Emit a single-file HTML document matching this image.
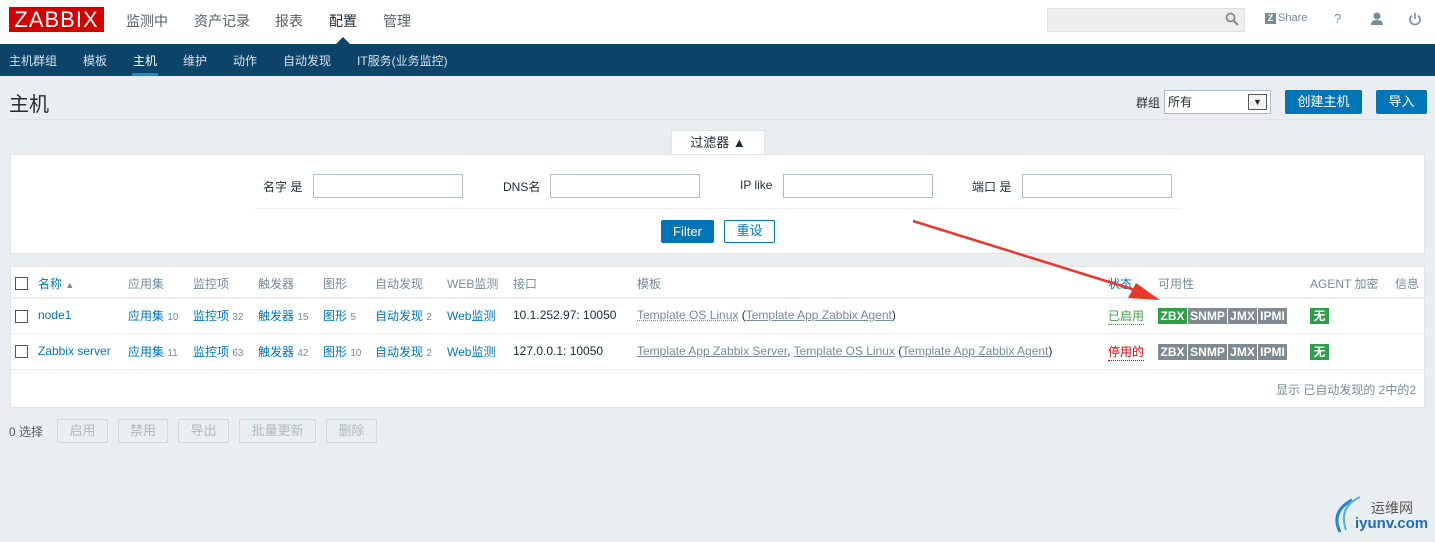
<!DOCTYPE html>
<html><head><meta charset="utf-8"><style>
*{margin:0;padding:0;box-sizing:border-box}
body{width:1435px;height:542px;background:#ebeef0;font-family:"Liberation Sans","Noto Sans CJK SC",sans-serif;font-size:12px;color:#1f2c33;position:relative;overflow:hidden}
.a{position:absolute;white-space:nowrap}
.top{position:absolute;left:0;top:0;width:1435px;height:44px;background:#fff}
.nav{position:absolute;left:0;top:44px;width:1435px;height:32px;background:#0b4468}
.m{font-size:14px;color:#555f66;top:11px}
.s{color:#fff;font-size:12px;top:52px;color:#d8e2ea}
.lnk{color:#0275b8}
.g{color:#768d99}
.inp{position:absolute;height:24px;border:1px solid #acbbc4;background:#fff}
.cb{position:absolute;width:13px;height:13px;border:1px solid #555;background:#fff}
.n{font-size:10px;color:#768d99}
.btn{position:absolute;background:#0275b8;color:#fff;font-size:13px;text-align:center;border-radius:2px}
.dis{position:absolute;height:24px;top:419px;border:1px solid #cfd7dc;color:#acbbc4;font-size:13px;text-align:center;line-height:22px;border-radius:2px}
.av{position:absolute;height:16px;font-size:12px;color:#fff;line-height:16px;text-align:center;font-weight:bold}
.hl{position:absolute;left:10px;width:1415px;height:1px;background:#ebeef0}
</style></head><body>
<div class="top"></div>
<div class="a" style="left:9px;top:7px;width:95px;height:25px;background:#d40000;color:#fff;font-size:22px;line-height:25px;text-align:center;letter-spacing:1px">ZABBIX</div>
<div class="a m" style="left:126px">监测中</div>
<div class="a m" style="left:194px">资产记录</div>
<div class="a m" style="left:275px">报表</div>
<div class="a m" style="left:329px;color:#1f2c33">配置</div>
<div class="a m" style="left:383px">管理</div>
<div class="a" style="left:1047px;top:8px;width:198px;height:24px;background:#eeeeee;border:1px solid #e0e0e0"></div>
<svg class="a" style="left:1225px;top:12px" width="14" height="14"><circle cx="5.5" cy="5.5" r="4" stroke="#888" stroke-width="1.8" fill="none"/><line x1="8.5" y1="8.5" x2="13" y2="13" stroke="#888" stroke-width="2"/></svg>
<div class="a" style="left:1265px;top:13px;width:11px;height:11px;background:#768d99;color:#fff;font-size:9px;font-weight:bold;text-align:center;line-height:11px">Z</div>
<div class="a" style="left:1278px;top:12px;color:#768d99;font-size:11px">Share</div>
<div class="a" style="left:1334px;top:11px;color:#768d99;font-size:13px">?</div>
<svg class="a" style="left:1370px;top:12px" width="14" height="14"><circle cx="7" cy="4" r="3.5" fill="#768d99"/><path d="M1 13 Q1 8 7 8 Q13 8 13 13Z" fill="#768d99"/></svg>
<svg class="a" style="left:1408px;top:12px" width="14" height="14"><path d="M4 3.5 A5 5 0 1 0 10 3.5" stroke="#768d99" stroke-width="1.6" fill="none"/><line x1="7" y1="1" x2="7" y2="7" stroke="#768d99" stroke-width="1.6"/></svg>
<div class="nav"></div>
<svg class="a" style="left:335px;top:37px" width="16" height="8"><path d="M0 8 L8 0 L16 8Z" fill="#0b4468"/></svg>
<div class="a s" style="left:9px">主机群组</div>
<div class="a s" style="left:83px">模板</div>
<div class="a s" style="left:133px;color:#fff">主机</div>
<div class="a" style="left:132px;top:73px;width:26px;height:3px;background:#1e87d0"></div>
<div class="a s" style="left:183px">维护</div>
<div class="a s" style="left:233px">动作</div>
<div class="a s" style="left:283px">自动发现</div>
<div class="a s" style="left:357px">IT服务(业务监控)</div>
<div class="a" style="left:9px;top:88px;font-size:20px;color:#1f2c33">主机</div>
<div class="a" style="left:9px;top:119px;width:1417px;height:1px;background:#dfe4e7"></div>
<div class="a" style="left:1136px;top:94px;font-size:12px">群组</div>
<div class="inp" style="left:1164px;top:90px;width:107px;height:24px;font-size:12px;padding:2px 3px">所有</div>
<div class="a" style="left:1248px;top:94px;width:19px;height:16px;border:1px solid #555;background:#f4f4f4;font-size:9px;text-align:center;line-height:14px">▼</div>
<div class="btn" style="left:1285px;top:90px;width:77px;height:24px;line-height:23px">创建主机</div>
<div class="btn" style="left:1376px;top:90px;width:51px;height:24px;line-height:23px">导入</div>
<div class="a" style="left:671px;top:130px;width:94px;height:25px;background:#fff;border:1px solid #dfe4e7;border-bottom:none;text-align:center;line-height:24px;font-size:13px">过滤器 ▲</div>
<div class="a" style="left:10px;top:154px;width:1415px;height:100px;background:#fff;border:1px solid #dfe4e7"></div>
<div class="a" style="left:263px;top:178px">名字 是</div>
<div class="inp" style="left:313px;top:174px;width:150px"></div>
<div class="a" style="left:503px;top:178px">DNS名</div>
<div class="inp" style="left:550px;top:174px;width:150px"></div>
<div class="a" style="left:740px;top:178px">IP like</div>
<div class="inp" style="left:783px;top:174px;width:150px"></div>
<div class="a" style="left:972px;top:178px">端口 是</div>
<div class="inp" style="left:1022px;top:174px;width:150px"></div>
<div class="a" style="left:255px;top:208px;width:927px;height:1px;background:#ebeef0"></div>
<div class="btn" style="left:661px;top:220px;width:53px;height:23px;line-height:23px">Filter</div>
<div class="a" style="left:724px;top:220px;width:51px;height:23px;border:1px solid #0275b8;border-radius:2px;color:#0275b8;font-size:13px;text-align:center;line-height:20px;background:#fff">重设</div>
<div class="a" style="left:10px;top:266px;width:1415px;height:142px;background:#fff;border:1px solid #dfe4e7"></div>
<div class="hl" style="top:297px;height:2px"></div>
<div class="hl" style="top:333px"></div>
<div class="hl" style="top:369px"></div>
<div class="cb" style="left:15px;top:277px"></div>
<div class="a lnk" style="left:38px;top:275px">名称 <span style="color:#768d99;font-size:9px">▲</span></div>
<div class="a g" style="left:128px;top:275px">应用集</div>
<div class="a g" style="left:193px;top:275px">监控项</div>
<div class="a g" style="left:258px;top:275px">触发器</div>
<div class="a g" style="left:323px;top:275px">图形</div>
<div class="a g" style="left:375px;top:275px">自动发现</div>
<div class="a g" style="left:447px;top:275px">WEB监测</div>
<div class="a g" style="left:513px;top:275px">接口</div>
<div class="a g" style="left:637px;top:275px">模板</div>
<div class="a g" style="left:1108px;top:275px;color:#0275b8">状态</div>
<div class="a g" style="left:1158px;top:275px">可用性</div>
<div class="a g" style="left:1310px;top:275px">AGENT 加密</div>
<div class="a g" style="left:1395px;top:275px">信息</div>

<div class="cb" style="left:15px;top:310px"></div>
<div class="a lnk" style="left:38px;top:308px">node1</div>
<div class="a lnk" style="left:128px;top:307px">应用集 <span class="n">10</span></div>
<div class="a lnk" style="left:193px;top:307px">监控项 <span class="n">32</span></div>
<div class="a lnk" style="left:258px;top:307px">触发器 <span class="n">15</span></div>
<div class="a lnk" style="left:323px;top:307px">图形 <span class="n">5</span></div>
<div class="a lnk" style="left:375px;top:307px">自动发现 <span class="n">2</span></div>
<div class="a lnk" style="left:447px;top:307px">Web监测</div>
<div class="a" style="left:513px;top:308px">10.1.252.97: 10050</div>
<div class="a" style="left:637px;top:308px;color:#768d99"><u style="text-decoration-style:dotted">Template OS Linux</u> <span style="color:#1f2c33">(</span><u>Template App Zabbix Agent</u><span style="color:#1f2c33">)</span></div>
<div class="a" style="left:1108px;top:307px;color:#429e47;border-bottom:1px dotted #429e47">已启用</div>

<div class="cb" style="left:15px;top:345px"></div>
<div class="a lnk" style="left:38px;top:344px">Zabbix server</div>
<div class="a lnk" style="left:128px;top:343px">应用集 <span class="n">11</span></div>
<div class="a lnk" style="left:193px;top:343px">监控项 <span class="n">63</span></div>
<div class="a lnk" style="left:258px;top:343px">触发器 <span class="n">42</span></div>
<div class="a lnk" style="left:323px;top:343px">图形 <span class="n">10</span></div>
<div class="a lnk" style="left:375px;top:343px">自动发现 <span class="n">2</span></div>
<div class="a lnk" style="left:447px;top:343px">Web监测</div>
<div class="a" style="left:513px;top:344px">127.0.0.1: 10050</div>
<div class="a" style="left:637px;top:344px;color:#768d99"><u>Template App Zabbix Server</u><span style="color:#1f2c33">,</span> <u>Template OS Linux</u> <span style="color:#1f2c33">(</span><u>Template App Zabbix Agent</u><span style="color:#1f2c33">)</span></div>
<div class="a" style="left:1108px;top:343px;color:#dc0000;border-bottom:1px dotted #dc0000">停用的</div>

<div class="av" style="left:1158px;top:308px;width:29px;background:#2f9f47">ZBX</div>
<div class="av" style="left:1188px;top:308px;width:39px;background:#808a90">SNMP</div>
<div class="av" style="left:1228px;top:308px;width:29px;background:#808a90">JMX</div>
<div class="av" style="left:1258px;top:308px;width:29px;background:#808a90">IPMI</div>
<div class="av" style="left:1310px;top:308px;width:19px;background:#2f9f47">无</div>
<div class="av" style="left:1158px;top:344px;width:29px;background:#808a90">ZBX</div>
<div class="av" style="left:1188px;top:344px;width:39px;background:#808a90">SNMP</div>
<div class="av" style="left:1228px;top:344px;width:29px;background:#808a90">JMX</div>
<div class="av" style="left:1258px;top:344px;width:29px;background:#808a90">IPMI</div>
<div class="av" style="left:1310px;top:344px;width:19px;background:#2f9f47">无</div>

<div class="a g" style="left:1276px;top:381px">显示 已自动发现的 2中的2</div>
<div class="a" style="left:9px;top:423px;color:#555f66">0 选择</div>
<div class="dis" style="left:57px;width:51px">启用</div>
<div class="dis" style="left:118px;width:50px">禁用</div>
<div class="dis" style="left:178px;width:51px">导出</div>
<div class="dis" style="left:239px;width:77px">批量更新</div>
<div class="dis" style="left:326px;width:51px">删除</div>

<svg class="a" style="left:0;top:0" width="1435" height="542"><line x1="913" y1="221" x2="1135" y2="290" stroke="#e8392f" stroke-width="2.5"/><path d="M1160 300 L1128 298 L1136 283Z" fill="#e8392f"/>
<path d="M1352 500 Q1330 512 1340 532" stroke="#1e87d0" stroke-width="3" fill="none"/><path d="M1360 497 Q1338 507 1346 530" stroke="#55aee6" stroke-width="2" fill="none"/></svg>
<div class="a" style="left:1371px;top:498px;font-size:14px;color:#555">运维网</div>
<div class="a" style="left:1355px;top:515px;font-size:15px;color:#1e6cb8;font-weight:bold">iyunv.com</div>
</body></html>
